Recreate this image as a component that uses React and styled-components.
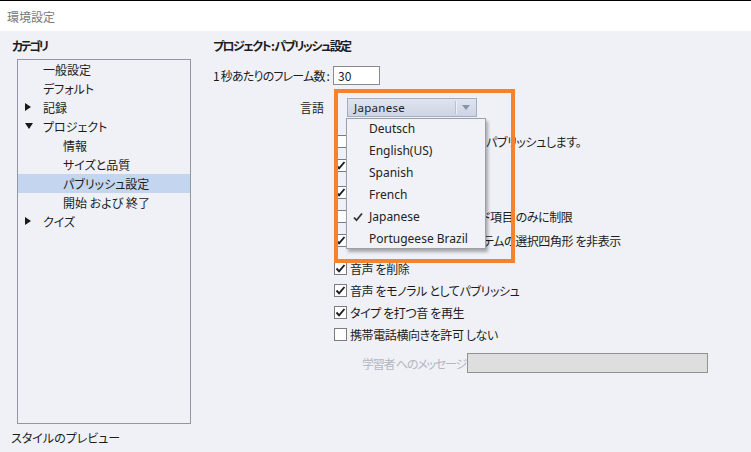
import React from "react";
import styled, { createGlobalStyle } from "styled-components";

const Global = createGlobalStyle`
  html, body { margin: 0; padding: 0; }
  body {
    width: 751px; height: 452px; overflow: hidden;
    background: #eff1f6;
    font-family: "Noto Sans CJK JP", "Noto Sans", sans-serif;
    font-size: 12px; color: #1c1c1c;
    font-feature-settings: "palt";
  }
`;

const Page = styled.div`
  width: 751px; height: 452px;
  display: flex; flex-direction: column;
  border-top: 1px solid #000;
  box-sizing: border-box;
`;

const TitleBar = styled.div`
  height: 30px; flex: none;
  background: #fff;
  display: flex; align-items: center;
  padding-left: 7px;
  color: #7a7a7a;
  font-size: 12px;
`;

const Body = styled.div`
  flex: 1; display: flex;
  background: #eff1f6;
`;

const LeftPanel = styled.div`
  width: 200px; flex: none;
  display: flex; flex-direction: column;
  padding-top: 7px;
  box-sizing: border-box;
`;

const SectionTitle = styled.div`
  font-weight: bold;
  line-height: 16px;
  height: 16px;
  white-space: pre;
  letter-spacing: ${p => p.$tight}px;
  padding-left: ${p => p.$indent || 0}px;
`;

const TreeBox = styled.div`
  margin: 5px 0 0 17px;
  width: 174px; height: 365px;
  box-sizing: border-box;
  border: 1px solid #9496a6;
  display: flex; flex-direction: column;
`;

const TreeRow = styled.div`
  height: 19px; flex: none;
  box-sizing: border-box;
  display: flex; align-items: center;
  background: ${p => (p.$selected ? "#c3d5ef" : "transparent")};
  padding-left: ${p => 25 + p.$level * 20}px;
  padding-bottom: 1px;
`;

const Arrow = styled.span`
  width: 18px; flex: none;
  margin-left: -18px;
  display: flex; align-items: center;
`;

const PreviewLabel = styled.div`
  margin: 6px 0 0 11px;
  line-height: 16px;
`;

const RightPanel = styled.div`
  flex: 1; position: relative;
  padding: 7px 0 0 13px;
  display: flex; flex-direction: column;
`;

const FrameRow = styled.div`
  display: flex; align-items: center;
  margin-top: 12px; height: 19px;
`;

const FrameLabel = styled.span`
  letter-spacing: -0.8px;
  white-space: pre;
`;

const TextInput = styled.div`
  margin-left: 4px;
  width: 47px; height: 19px;
  box-sizing: border-box;
  border: 1px solid #8a8a8a;
  background: #fff;
  padding-left: 4px;
  line-height: 17px;
`;

const LangRow = styled.div`
  display: flex; align-items: center;
  margin-top: 13px; height: 19px;
`;

const LangLabel = styled.div`
  width: 111px; text-align: right;
  margin-right: 23px;
`;

const SelectWrap = styled.div`
  position: relative;
  width: 130px; height: 19px;
  box-sizing: border-box;
  border: 1px solid #a3adc3;
  background: linear-gradient(#dfe4ef, #cdd4e4);
  display: flex; align-items: center;
  font-family: "Noto Sans", sans-serif;
  font-size: 11.5px;
  color: #222;
  padding-left: 6px;
`;

const SelectText = styled.span`
  flex: 1;
  letter-spacing: 0.3px;
`;

const SelectSep = styled.span`
  width: 1px; height: 13px;
  background: #b9c0d0;
  box-shadow: 1px 0 0 #eef1f7;
  margin-right: 6px;
`;

const SelectArrow = styled.span`
  width: 0; height: 0;
  border-left: 4px solid transparent;
  border-right: 4px solid transparent;
  border-top: 5px solid #8a93a8;
  margin-right: 6px;
`;

const Menu = styled.div`
  position: absolute;
  left: -2px; top: 19px;
  width: 140px; height: 131px;
  box-sizing: border-box;
  background: #f1f2f7;
  border: 1px solid #9d9fab;
  box-shadow: 2px 3px 3px rgba(0, 0, 0, 0.3);
  display: flex; flex-direction: column;
  z-index: 5;
`;

const MenuItem = styled.div`
  height: 22px; flex: none;
  box-sizing: border-box;
  display: flex; align-items: center;
  font-family: "Noto Sans", sans-serif;
  font-size: 12px;
  color: #222;
  padding: 0 0 3px 22px;
  position: relative;
`;

const MenuCheck = styled.span`
  position: absolute;
  left: 6px; top: 5px;
  display: flex;
`;

const Highlight = styled.div`
  position: absolute;
  left: 134px; top: 58px;
  width: 181px; height: 174px;
  box-sizing: border-box;
  border: 4px solid #f6832b;
  z-index: 6;
  pointer-events: none;
`;

const CheckList = styled.div`
  display: flex; flex-direction: column;
  padding: 13px 0 0 121px;
`;

const CheckRow = styled.div`
  display: flex; align-items: center;
  height: 22px;
  margin-top: ${p => p.$gap || 0}px;
  white-space: nowrap;
  letter-spacing: -0.4px;
`;

const Covered = styled.span`
  display: inline-block;
  width: ${p => p.$w}px;
  overflow: hidden;
  flex: none;
`;

const Box = styled.span`
  width: 13px; height: 13px; flex: none;
  display: flex;
  margin-right: 3px;
`;

const MessageRow = styled.div`
  display: flex; align-items: center;
  margin-top: 8px;
  padding-left: 149px;
  height: 20px;
`;

const MessageLabel = styled.span`
  color: #b4b6bf;
  width: 105px;
  white-space: nowrap;
  letter-spacing: -1.2px;
`;

const MessageInput = styled.div`
  width: 241px; height: 20px;
  box-sizing: border-box;
  border: 1px solid #929292;
  background: #dedede;
`;

const Tri = ({ down }) =>
  down ? (
    <svg width="8" height="6" viewBox="0 0 8 6"><path d="M0 0h8L4 6z" fill="#1a1a1a" /></svg>
  ) : (
    <svg width="6" height="8" viewBox="0 0 6 8"><path d="M0 0v8l6-4z" fill="#1a1a1a" /></svg>
  );

const CheckBox = ({ checked }) => (
  <Box>
    <svg width="13" height="13" viewBox="0 0 13 13">
      <rect x="0.5" y="0.5" width="12" height="12" fill="#fff" stroke="#7c7c80" />
      {checked && (
        <path d="M2.5 6.5l2.6 2.8L10.5 3" fill="none" stroke="#1e1e1e" strokeWidth="1.9" />
      )}
    </svg>
  </Box>
);

const tree = [
  { t: "一般設定", l: 0 },
  { t: "デフォルト", l: 0 },
  { t: "記録", l: 0, a: "right" },
  { t: "プロジェクト", l: 0, a: "down" },
  { t: "情報", l: 1 },
  { t: "サイズと品質", l: 1 },
  { t: "パブリッシュ設定", l: 1, s: true },
  { t: "開始 および 終了", l: 1 },
  { t: "クイズ", l: 0, a: "right" },
];

const langs = ["Deutsch", "English(US)", "Spanish", "French", "Japanese", "Portugeese Brazil"];

const checks = [
  { h: "Flash Player として", w: 136, t: "パブリッシュします。", c: false, g: 0 },
  { t: "スキンを外部化", c: true, g: 2 },
  { t: "ウィジェットを外部化", c: true, g: 5 },
  { h: "ナビゲーションをフィール", w: 131, t: "ド項目 のみに制限", c: false, g: 2 },
  { h: "クリックボックス アイ", w: 133, t: "テムの選択四角形 を非表示", c: true, g: 2 },
  { t: "音声 を削除", c: true, g: 6 },
  { t: "音声 をモノラル としてパブリッシュ", c: true, g: 0 },
  { t: "タイプ を打つ音 を再生", c: true, g: 0 },
  { t: "携帯電話横向きを許可 しない", c: false, g: 0 },
];

export default function App() {
  return (
    <>
      <Global />
      <Page>
        <TitleBar>環境設定</TitleBar>
        <Body>
          <LeftPanel>
            <SectionTitle $indent={12} $tight={-2.5}>カテゴリ</SectionTitle>
            <TreeBox>
              {tree.map((r, i) => (
                <TreeRow key={i} $level={r.l} $selected={r.s}>
                  {r.l === 0 && <Arrow>{r.a && <Tri down={r.a === "down"} />}</Arrow>}
                  {r.t}
                </TreeRow>
              ))}
            </TreeBox>
            <PreviewLabel>スタイルのプレビュー</PreviewLabel>
          </LeftPanel>
          <RightPanel>
            <SectionTitle $tight={-1.6}>プロジェクト : パブリッシュ設定</SectionTitle>
            <FrameRow>
              <FrameLabel>1 秒あたりのフレーム数 :</FrameLabel>
              <TextInput>30</TextInput>
            </FrameRow>
            <LangRow>
              <LangLabel>言語</LangLabel>
              <SelectWrap>
                <SelectText>Japanese</SelectText>
                <SelectSep />
                <SelectArrow />
                <Menu>
                  {langs.map(l => (
                    <MenuItem key={l}>
                      {l === "Japanese" && (
                        <MenuCheck>
                          <svg width="10" height="10" viewBox="0 0 10 10">
                            <path d="M1 5.5l2.5 2.7L9 1.5" fill="none" stroke="#333" strokeWidth="1.8" />
                          </svg>
                        </MenuCheck>
                      )}
                      {l}
                    </MenuItem>
                  ))}
                </Menu>
              </SelectWrap>
            </LangRow>
            <CheckList>
              {checks.map((c, i) => (
                <CheckRow key={i} $gap={c.g}>
                  <CheckBox checked={c.c} />
                  {c.h && <Covered $w={c.w}>{c.h}</Covered>}
                  {c.t}
                </CheckRow>
              ))}
            </CheckList>
            <MessageRow>
              <MessageLabel>学習者 へのメッセージ</MessageLabel>
              <MessageInput />
            </MessageRow>
            <Highlight />
          </RightPanel>
        </Body>
      </Page>
    </>
  );
}
